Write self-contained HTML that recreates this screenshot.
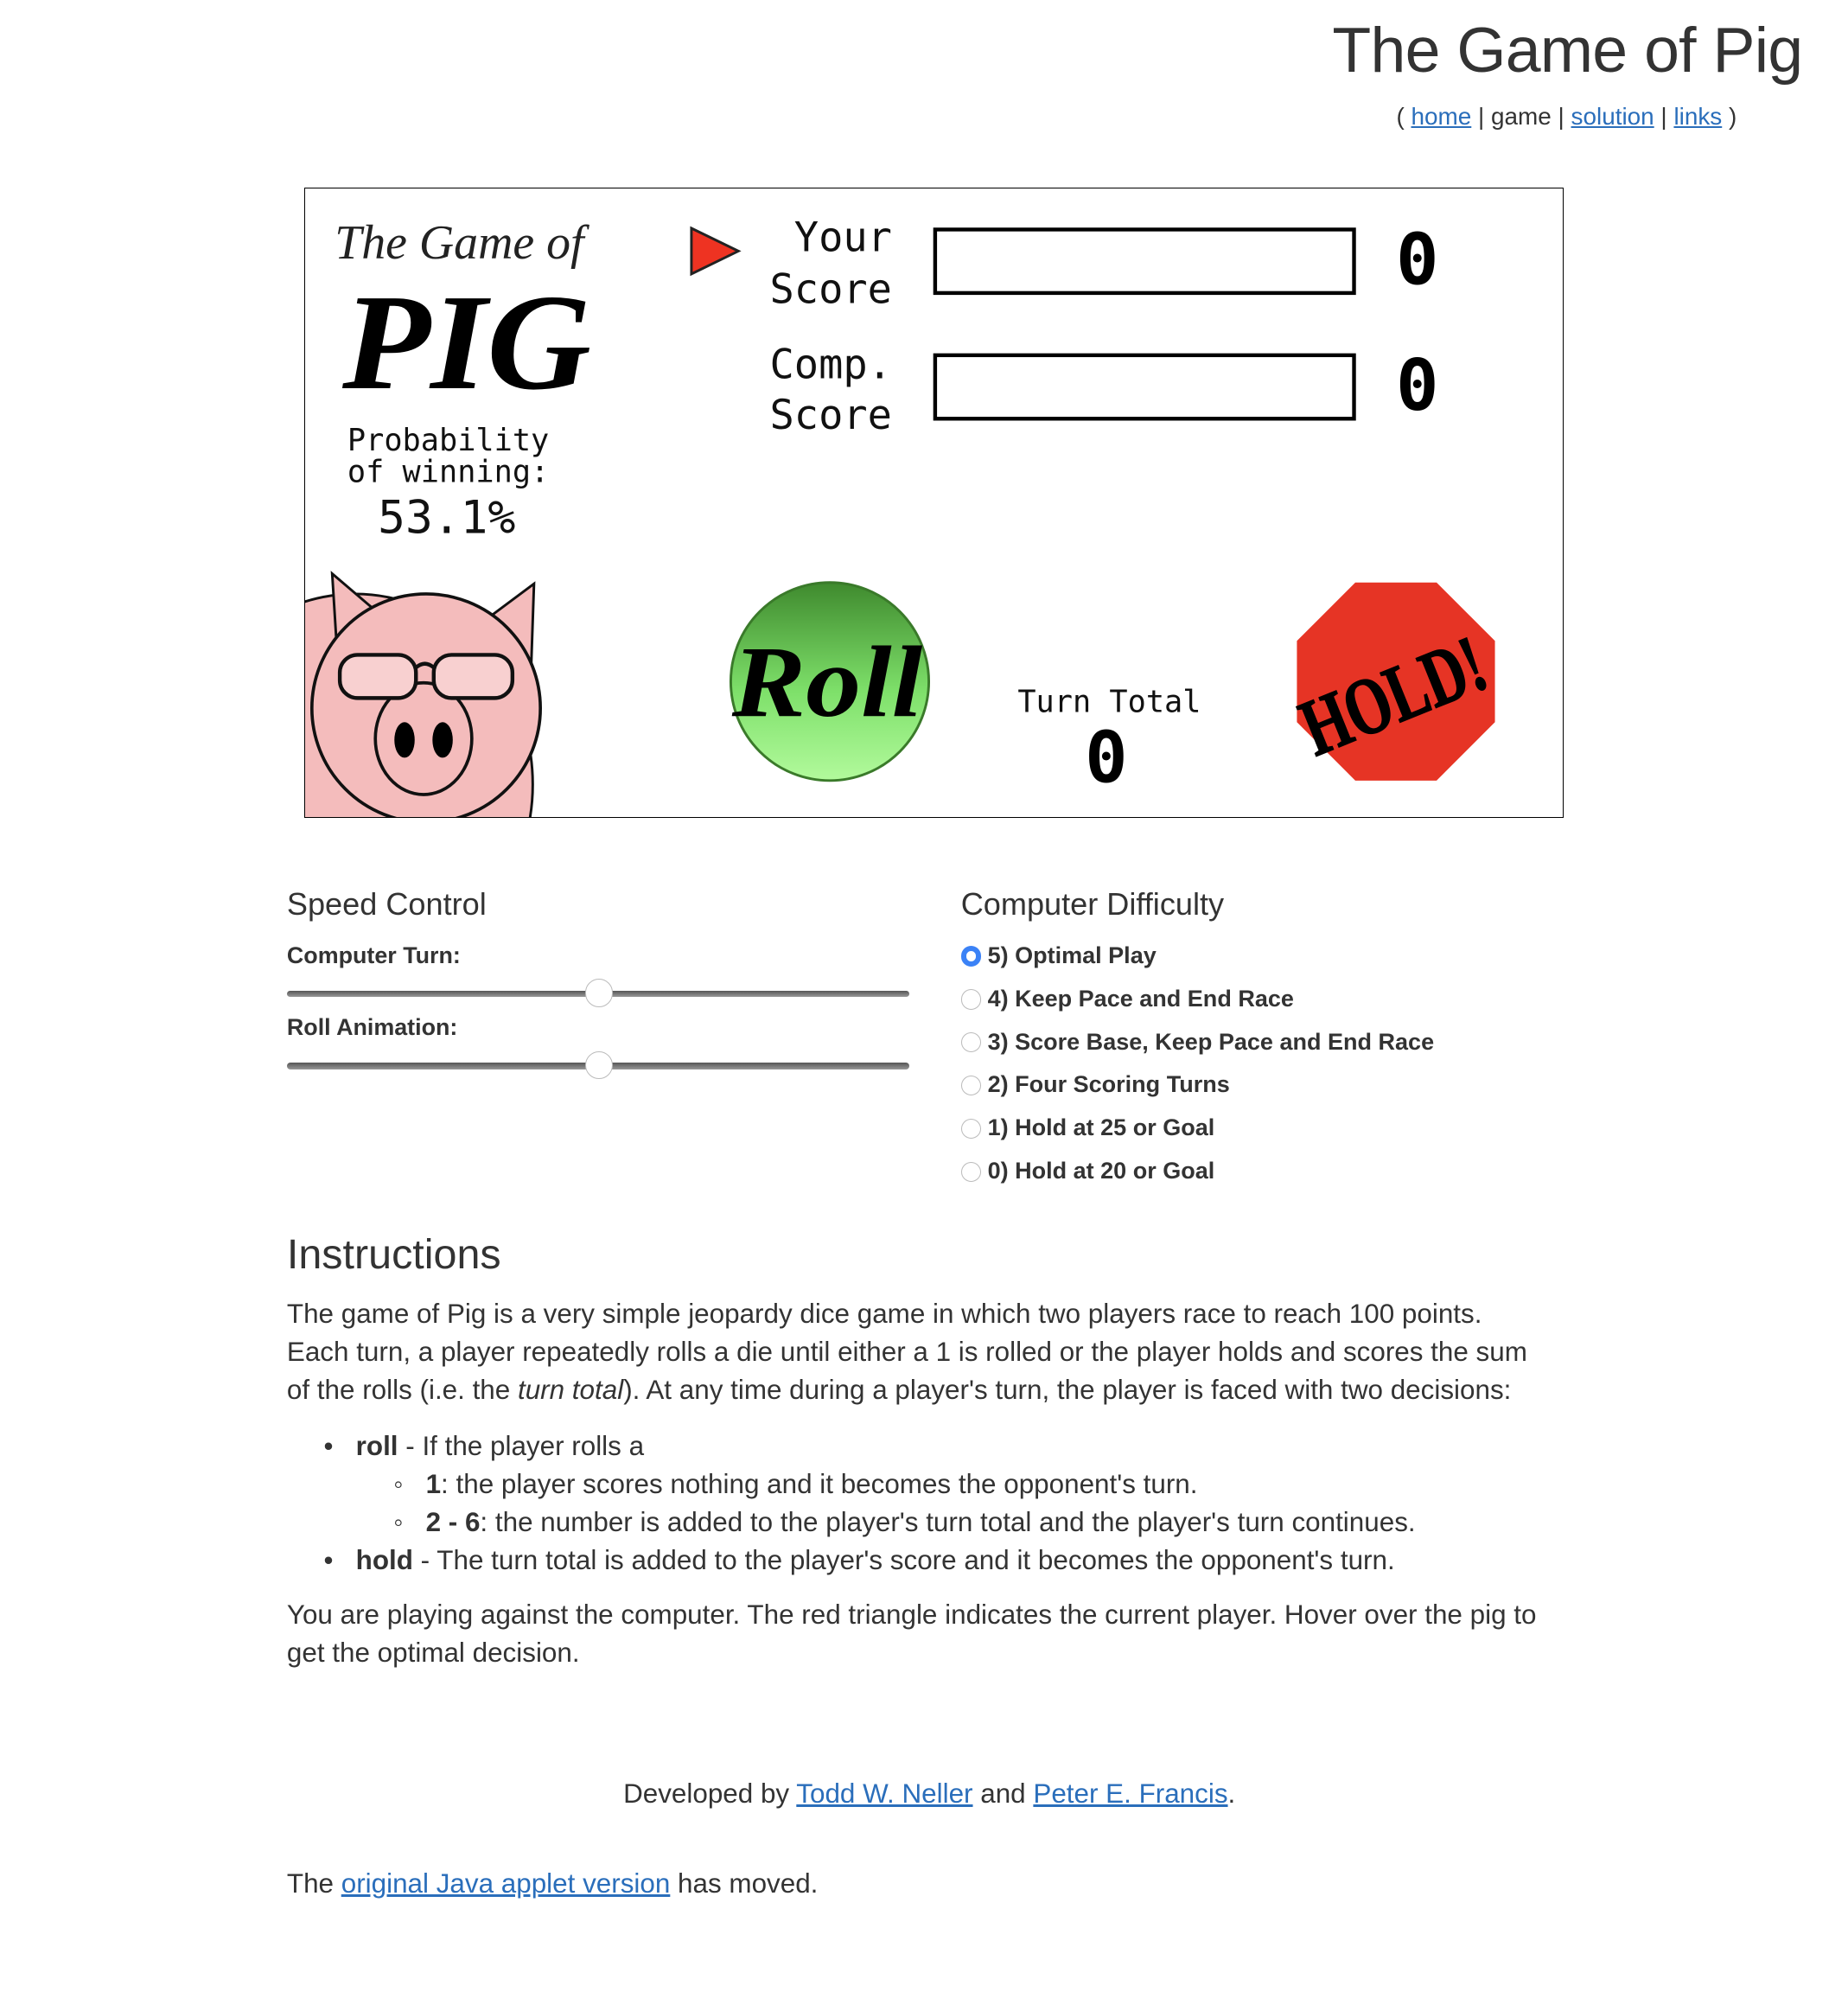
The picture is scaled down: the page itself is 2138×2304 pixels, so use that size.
<!DOCTYPE html>
<html><head><meta charset="utf-8">
<style>
html,body{margin:0;padding:0;background:#fff}
body{zoom:1.4686;width:1456px;height:1569px;position:relative;overflow:hidden;font-family:"Liberation Sans",Arial,sans-serif;color:#333}
.a{position:absolute;white-space:nowrap}
a{color:#2a6ebb;text-decoration:underline}
h1{margin:0;font-weight:normal;font-size:50px;letter-spacing:-0.5px}
.lbl{font-weight:bold;font-size:18.3px}
.slider{position:absolute;left:226px;width:490px;height:5px;border-radius:3px;background:linear-gradient(#555,#999)}
.thumb{position:absolute;left:235px;top:-9px;width:22px;height:22px;border-radius:50%;background:#fff;border:1px solid #bbb;box-sizing:border-box}
.radio{position:absolute;left:757px;width:16px;height:16px;border-radius:50%;border:1px solid #bbb;box-sizing:border-box;background:#fff}
.rt{left:778px;font-weight:bold;font-size:18.4px}
.p{font-size:21.4px;line-height:30px}
</style></head><body>
<h1 class="a" style="right:36px;top:11px">The Game of Pig</h1>
<div class="a" style="left:1100px;top:81px;font-size:19px">( <a>home</a> | game | <a>solution</a> | <a>links</a> )</div>

<div class="a" style="left:240px;top:148px;width:992px;height:496px;border:1px solid #000;box-sizing:border-box;overflow:hidden">
<svg width="992" height="496" viewBox="0 0 992 496" style="position:absolute;left:-1px;top:-1px">
<text x="24" y="56" font-family="Liberation Serif" font-style="italic" font-size="38" fill="#222">The Game of</text>
<text x="30" y="158" font-family="Liberation Serif" font-style="italic" font-weight="bold" font-size="108" fill="#000" textLength="196" lengthAdjust="spacingAndGlyphs">PIG</text>
<text x="34" y="207" font-family="DejaVu Sans Mono" font-size="24" fill="#111">Probability</text>
<text x="34" y="232" font-family="DejaVu Sans Mono" font-size="24" fill="#111">of winning:</text>
<text x="58" y="272" font-family="DejaVu Sans Mono" font-size="36" fill="#111">53.1%</text>
<polygon points="305,32 342,50 305,68" fill="#e32" stroke="#222" stroke-width="2"/>
<g font-family="DejaVu Sans Mono" font-size="32" fill="#111" text-anchor="end">
<text x="463" y="50">Your</text><text x="463" y="91">Score</text>
<text x="463" y="150">Comp.</text><text x="463" y="190">Score</text></g>
<rect x="497" y="33" width="330" height="50" fill="#fff" stroke="#000" stroke-width="3"/>
<rect x="497" y="132" width="330" height="50" fill="#fff" stroke="#000" stroke-width="3"/>
<g font-family="DejaVu Sans Mono" font-weight="bold" font-size="56" fill="#000">
<text x="860" y="76">0</text><text x="860" y="175">0</text>
<text x="615" y="468">0</text></g>
<text x="562" y="413" font-family="DejaVu Sans Mono" font-size="24" fill="#111">Turn Total</text>
<ellipse cx="40" cy="470" rx="140" ry="150" fill="#f4bcbc" stroke="#111" stroke-width="2"/>
<polygon points="22,304 70,345 28,400" fill="#f4bcbc" stroke="#111" stroke-width="2"/>
<polygon points="181,312 130,350 178,400" fill="#f4bcbc" stroke="#111" stroke-width="2"/>
<circle cx="96" cy="410" r="90" fill="#f4bcbc" stroke="#111" stroke-width="2.5"/>
<ellipse cx="94" cy="434" rx="38" ry="44" fill="#f4bcbc" stroke="#111" stroke-width="2.5"/>
<ellipse cx="79" cy="435" rx="8" ry="14" fill="#000"/>
<ellipse cx="109" cy="435" rx="8" ry="14" fill="#000"/>
<g fill="#f8d0d0" stroke="#111" stroke-width="3">
<rect x="28" y="368" width="60" height="34" rx="14"/><rect x="102" y="368" width="62" height="34" rx="14"/>
<path d="M88 378 Q95 372 102 378" fill="none"/></g>
<defs><linearGradient id="g" x1="0" y1="0" x2="0" y2="1"><stop offset="0" stop-color="#3f8a2e"/><stop offset=".55" stop-color="#7ee06a"/><stop offset="1" stop-color="#b2fa9c"/></linearGradient></defs>
<circle cx="414" cy="389" r="78" fill="url(#g)" stroke="#3a7a2a" stroke-width="2"/>
<text x="412" y="416" text-anchor="middle" font-family="Liberation Serif" font-style="italic" font-weight="bold" font-size="80" fill="#000" textLength="150" lengthAdjust="spacingAndGlyphs">Roll</text>
<polygon points="828,311 892,311 938,357 938,421 892,467 828,467 782,421 782,357" fill="#e63425"/>
<text x="0" y="0" transform="translate(866,420) rotate(-22)" text-anchor="middle" font-family="Liberation Serif" font-weight="bold" font-size="64" fill="#000" stroke="#000" textLength="150" lengthAdjust="spacingAndGlyphs">HOLD!</text>
</svg>
</div>

<div class="a" style="left:226px;top:698px;font-size:24.6px">Speed Control</div>
<div class="a lbl" style="left:226px;top:742px">Computer Turn:</div>
<div class="slider" style="top:780px"><div class="thumb"></div></div>
<div class="a lbl" style="left:226px;top:799px">Roll Animation:</div>
<div class="slider" style="top:837px"><div class="thumb"></div></div>

<div class="a" style="left:757px;top:698px;font-size:24.6px">Computer Difficulty</div>
<div class="radio" style="top:745px;border:4.5px solid #3b82f6"></div><div class="a rt" style="top:742px">5) Optimal Play</div>
<div class="radio" style="top:779px"></div><div class="a rt" style="top:776px">4) Keep Pace and End Race</div>
<div class="radio" style="top:813px"></div><div class="a rt" style="top:810px">3) Score Base, Keep Pace and End Race</div>
<div class="radio" style="top:847px"></div><div class="a rt" style="top:844px">2) Four Scoring Turns</div>
<div class="radio" style="top:881px"></div><div class="a rt" style="top:878px">1) Hold at 25 or Goal</div>
<div class="radio" style="top:915px"></div><div class="a rt" style="top:912px">0) Hold at 20 or Goal</div>

<div class="a" style="left:226px;top:969px;font-size:33px">Instructions</div>
<div class="a p" style="left:226px;top:1020px;white-space:normal;width:1010px">The game of Pig is a very simple jeopardy dice game in which two players race to reach 100 points.<br>Each turn, a player repeatedly rolls a die until either a 1 is rolled or the player holds and scores the sum<br>of the rolls (i.e. the <i>turn total</i>). At any time during a player's turn, the player is faced with two decisions:</div>
<div class="a p" style="left:255px;top:1124px">•&nbsp;&nbsp; <b>roll</b> - If the player rolls a</div>
<div class="a p" style="left:310px;top:1154px">◦&nbsp;&nbsp; <b>1</b>: the player scores nothing and it becomes the opponent's turn.</div>
<div class="a p" style="left:310px;top:1184px">◦&nbsp;&nbsp; <b>2 - 6</b>: the number is added to the player's turn total and the player's turn continues.</div>
<div class="a p" style="left:255px;top:1214px">•&nbsp;&nbsp; <b>hold</b> - The turn total is added to the player's score and it becomes the opponent's turn.</div>
<div class="a p" style="left:226px;top:1257px;white-space:normal;width:1020px">You are playing against the computer. The red triangle indicates the current player. Hover over the pig to<br>get the optimal decision.</div>
<div class="a p" style="left:491px;top:1398px">Developed by <a>Todd W. Neller</a> and <a>Peter E. Francis</a>.</div>
<div class="a p" style="left:226px;top:1469px">The <a>original Java applet version</a> has moved.</div>
</body></html>
